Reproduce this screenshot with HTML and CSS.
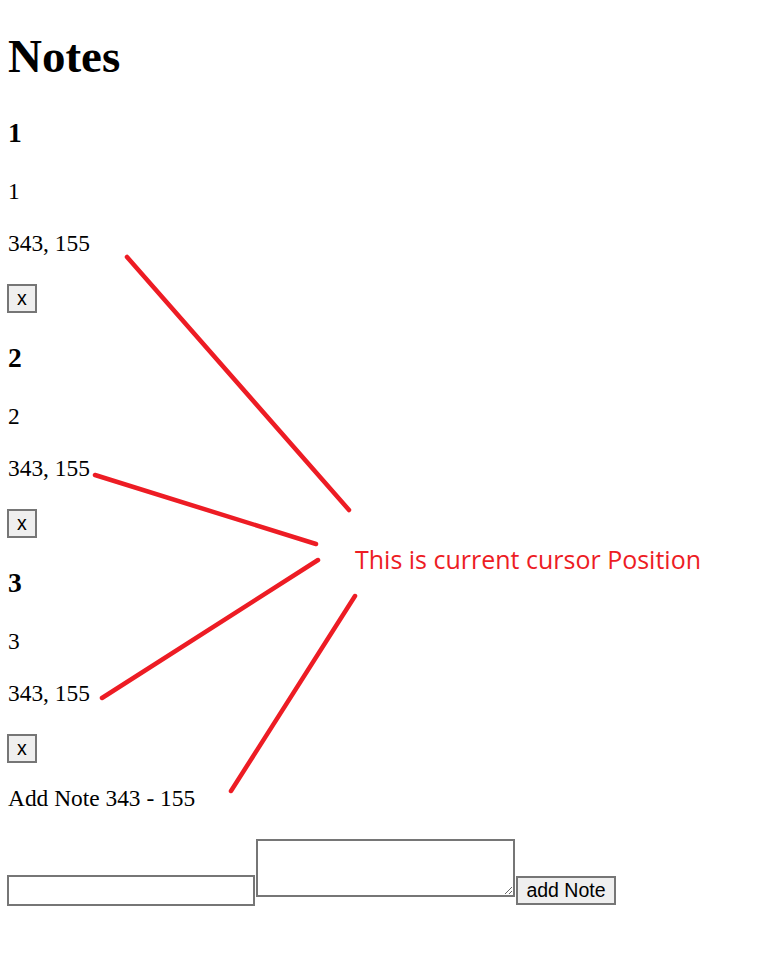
FILE: index.html
```html
<!DOCTYPE html>
<html>
<head>
<meta charset="utf-8">
<title>Notes</title>
<link rel="stylesheet" href="styles.css">
</head>
<body>
<div class="page">
  <h1 class="title">Notes</h1>
  <div class="note">
    <h3 class="note-title">1</h3>
    <p class="note-text">1</p>
    <p class="note-pos">343, 155</p>
    <button class="btn btn-x">x</button>
  </div>
  <div class="note">
    <h3 class="note-title">2</h3>
    <p class="note-text">2</p>
    <p class="note-pos">343, 155</p>
    <button class="btn btn-x">x</button>
  </div>
  <div class="note">
    <h3 class="note-title">3</h3>
    <p class="note-text">3</p>
    <p class="note-pos">343, 155</p>
    <button class="btn btn-x">x</button>
  </div>
  <div class="add-label">Add Note 343 - 155</div>
  <div class="add-row">
    <input class="field-input" type="text">
    <textarea class="field-area"></textarea>
    <button class="btn btn-add">add Note</button>
  </div>
</div>
<svg class="annot" width="768" height="972" viewBox="0 0 768 972">
  <g stroke="#ed1c24" stroke-width="4.5" stroke-linecap="round" fill="none">
    <line x1="127" y1="257" x2="349" y2="510"/>
    <line x1="95" y1="475" x2="316" y2="544"/>
    <line x1="102" y1="698" x2="318" y2="560"/>
    <line x1="231" y1="791" x2="355" y2="596"/>
  </g>
  <text x="355" y="569" class="annot-text" textLength="346" lengthAdjust="spacingAndGlyphs">This is current cursor Position</text>
</svg>
</body>
</html>
```
FILE: styles.css
```css
html, body {
  margin: 0;
  padding: 0;
  background: #ffffff;
}
body {
  position: relative;
  width: 768px;
  height: 972px;
  overflow: hidden;
  font-family: "Liberation Serif", "Times New Roman", serif;
  color: #000;
}
.page {
  display: flex;
  flex-direction: column;
  align-items: flex-start;
  padding-left: 7px;
}
.title {
  margin: 29px 0 0 1px;
  font-size: 47px;
  line-height: 54px;
  font-weight: bold;
}
.note {
  display: flex;
  flex-direction: column;
  align-items: flex-start;
  margin-top: 29.5px;
}
.note:first-of-type {
  margin-top: 34.3px;
}
.note-title {
  margin: 0 0 0 1px;
  font-size: 27.5px;
  line-height: 32px;
  font-weight: bold;
}
.note-text,
.note-pos,
.add-label {
  margin: 0 0 0 1px;
  font-size: 23.4px;
  line-height: 27px;
}
.note-text {
  margin-top: 29px;
}
.note-pos {
  margin-top: 25px;
}
.btn {
  box-sizing: border-box;
  margin: 0;
  padding: 0 8px;
  background: #efefef;
  border: 2px solid #767676;
  border-radius: 0;
  font-family: "Liberation Sans", Arial, sans-serif;
  font-size: 19.5px;
  color: #000;
  line-height: 1;
}
.btn-x {
  margin-top: 27px;
  height: 28.5px;
}
.add-label {
  margin-top: 22px;
}
.add-row {
  display: flex;
  align-items: flex-end;
  margin-top: 27px;
}
.field-input {
  box-sizing: border-box;
  width: 248px;
  height: 31px;
  margin: 0;
  border: 2px solid #767676;
  border-radius: 0;
  background: #fff;
  padding: 0 3px;
}
.field-area {
  box-sizing: border-box;
  width: 259px;
  height: 58px;
  margin: 0 0 9px 1px;
  border: 2px solid #767676;
  border-radius: 0;
  background: #fff;
  padding: 3px;
}
.btn-add {
  width: 100px;
  height: 29px;
  margin: 0 0 1px 1px;
  padding: 0;
}
.annot {
  position: absolute;
  top: 0;
  left: 0;
  pointer-events: none;
}
.annot-text {
  fill: #ed1c24;
  font-family: "Open Sans", "Noto Sans", sans-serif;
  font-size: 26px;
}
```
